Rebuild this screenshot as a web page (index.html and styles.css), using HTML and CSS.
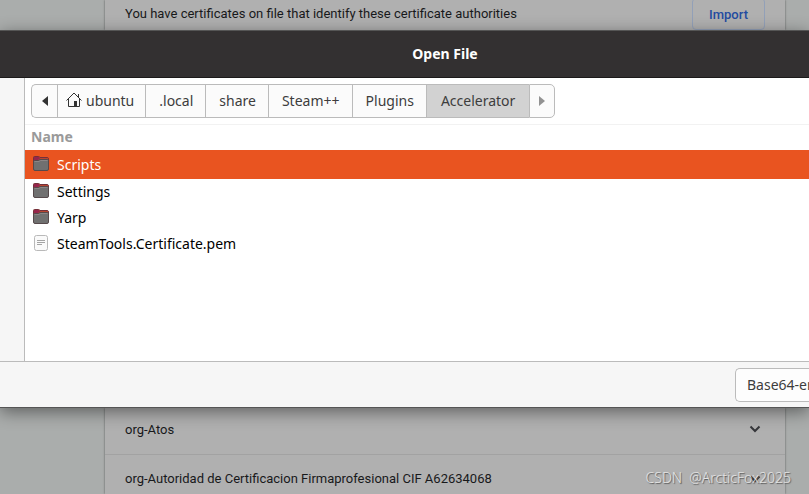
FILE: index.html
```
<!DOCTYPE html>
<html lang="en">
<head>
    <meta charset="UTF-8">
    <meta name="viewport" content="width=device-width, initial-scale=1.0">
    <title>Open File</title>
    <link rel="stylesheet" href="styles.css">
</head>
<body>
    <svg class="defs" aria-hidden="true">
        <symbol id="folder" viewBox="0 0 16 16">
            <path d="M0.500 3V1.500Q0.500 0.500 1.500 0.500H5.500Q6.500 0.500 7 1.500H14Q15.500 1.500 15.500 3V8H0.500Z" fill="#b8452f" stroke="#74303a"/>
            <path d="M1 1H6L7 2.500L5 4H1Z" fill="#96264c"/>
            <path d="M7 2.500H15" stroke="#b8452f"/>
            <path d="M0.500 5.500Q0.500 4.500 1.500 4.500H5.500L7 3.500H14.500Q15.500 3.500 15.500 4.500V13Q15.500 14.500 14 14.500H2Q0.500 14.500 0.500 13Z" fill="#707070" stroke="#56494b"/>
            <path d="M1.500 5.500H6L7.500 4.500H14.500" fill="none" stroke="#8c8686"/>
        </symbol>
        <symbol id="file" viewBox="0 0 16 16">
            <rect x="1.500" y="0.500" width="13" height="15" rx="2" fill="#fafafa" stroke="#b9b9b9"/>
            <path d="M4 5.500H12M4 7.500H12M4 9.500H9" stroke="#a4a4a4"/>
        </symbol>
        <symbol id="chevron" viewBox="0 0 12 8">
            <path d="M1.500 1.500L6 6L10.500 1.500" fill="none" stroke="#36373b" stroke-width="2"/>
        </symbol>
    </svg>

    <section class="card intro">
        <p>You have certificates on file that identify these certificate authorities</p>
        <button class="import">Import</button>
    </section>

    <section class="dialog" role="dialog" aria-labelledby="dialogTitle">
        <header class="titlebar">
            <h1 id="dialogTitle">Open File</h1>
        </header>
        <div class="content">
            <aside class="places"></aside>
            <div class="browser">
                <nav class="pathbar">
                    <button class="arrow" aria-label="Back">
                        <svg width="6" height="10" viewBox="0 0 6 10"><path d="M6 0V10L0 5Z" fill="#333"/></svg>
                    </button>
                    <button class="home">
                        <svg width="16" height="16" viewBox="0 0 16 16">
                            <path d="M0.500 8.500L8 1L15.500 8.500M2.500 7V14.500H13.500V7M12.500 5V2" fill="none" stroke="#333"/>
                            <path d="M8 9H11V14H8Z" fill="#333"/>
                        </svg>
                        ubuntu
                    </button>
                    <button>.local</button>
                    <button>share</button>
                    <button>Steam++</button>
                    <button>Plugins</button>
                    <button class="current">Accelerator</button>
                    <button class="arrow" aria-label="Forward">
                        <svg width="6" height="10" viewBox="0 0 6 10"><path d="M0 0V10L6 5Z" fill="#929292"/></svg>
                    </button>
                </nav>
                <table class="files">
                    <thead>
                        <tr><th>Name</th></tr>
                    </thead>
                    <tbody>
                        <tr class="selected"><td><svg><use href="#folder"/></svg>Scripts</td></tr>
                        <tr><td><svg><use href="#folder"/></svg>Settings</td></tr>
                        <tr><td><svg><use href="#folder"/></svg>Yarp</td></tr>
                        <tr><td><svg><use href="#file"/></svg>SteamTools.Certificate.pem</td></tr>
                    </tbody>
                </table>
            </div>
        </div>
        <footer class="filter">
            <select aria-label="File type">
                <option>Base64-encoded</option>
            </select>
        </footer>
    </section>

    <section class="card authorities">
        <div class="authority">
            <span>org-Atos</span>
            <svg><use href="#chevron"/></svg>
        </div>
        <div class="authority">
            <span>org-Autoridad de Certificacion Firmaprofesional CIF A62634068</span>
            <svg><use href="#chevron"/></svg>
        </div>
    </section>

    <svg class="marks" aria-hidden="true">
        <defs>
            <text id="mark"><tspan class="cjk">唐俊喜</tspan><tspan>-nullmax</tspan></text>
        </defs>
        <use href="#mark" transform="translate(-152 238) rotate(-30)"/>
        <use href="#mark" transform="translate(-100 328) rotate(-30)"/>
        <use href="#mark" transform="translate(-48 418) rotate(-30)"/>
        <use href="#mark" transform="translate(48 120) rotate(-30)"/>
        <use href="#mark" transform="translate(102 212) rotate(-30)"/>
        <use href="#mark" transform="translate(154 302) rotate(-30)"/>
        <use href="#mark" transform="translate(206 393) rotate(-30)"/>
        <use href="#mark" transform="translate(366 180) rotate(-30)"/>
        <use href="#mark" transform="translate(418 270) rotate(-30)"/>
        <use href="#mark" transform="translate(470 360) rotate(-30)"/>
        <use href="#mark" transform="translate(632 146) rotate(-30)"/>
        <use href="#mark" transform="translate(684 237) rotate(-30)"/>
        <use href="#mark" transform="translate(736 327) rotate(-30)"/>
    </svg>
    <div class="credit">CSDN &nbsp;@ArcticFox2025</div>
</body>
</html>
```
FILE: styles.css
```
*{
    box-sizing: border-box;
}

body{
    position: relative;
    margin: 0;
    height: 100vh;
    display: flex;
    flex-direction: column;
    overflow: hidden;
    background-color: #aaadac;
    font-family: "Noto Sans", "Open Sans", sans-serif;
    font-size: 14px;
}

button,
select{
    font: inherit;
    color: #3d3d3d;
}

.defs{
    position: absolute;
    width: 0;
    height: 0;
}

/* Settings page behind the dialog */
.card{
    margin: 0 24px 0 105px;
    background-color: #b0b0b0;
    box-shadow: 0 0 2px rgba(0,0,0,0.5);
    color: #18191b;
    font-family: Roboto, sans-serif;
    font-size: 13px;
}

.intro{
    flex: none;
    display: flex;
    justify-content: space-between;
    align-items: flex-end;
    height: 30px;
    padding: 0 20px;
}

.intro p{
    margin: 0;
    line-height: 32px;
}

.import{
    height: 32px;
    width: 73px;
    border: 1px solid #92a0b8;
    border-radius: 4px;
    background: none;
    color: #234ba0;
    font-weight: 500;
    line-height: 30px;
}

.authorities{
    flex: 1;
    min-height: 0;
}

.authority{
    display: flex;
    justify-content: space-between;
    align-items: center;
    height: 47px;
    padding: 0 24px 0 20px;
}

.authority:first-child{
    padding-bottom: 4px;
    border-bottom: 1px solid #a2a2a2;
}

.authority svg{
    width: 12px;
    height: 8px;
}

/* File chooser */
.dialog{
    position: relative;
    flex: none;
    border-top: 1px solid #555;
    border-bottom: 1px solid #555;
    background-color: #f6f6f6;
    box-shadow: 0 4px 16px rgba(0,0,0,0.45);
}

.titlebar{
    height: 47px;
    padding-left: 81px;
    border-bottom: 1px solid #1c1a1a;
    background-color: #333031;
}

h1{
    margin: 0;
    color: white;
    font-size: 14px;
    line-height: 46px;
    text-align: center;
}

.content{
    display: flex;
    min-height: 283px;
}

.places{
    width: 25px;
    border-right: 1px solid #bbb;
}

.browser{
    flex: 1;
    background-color: white;
}

.pathbar{
    display: flex;
    padding: 6px;
    border-bottom: 1px solid #f2f2f2;
}

.pathbar button{
    display: flex;
    align-items: center;
    justify-content: center;
    height: 34px;
    padding: 0 12px 2px 13px;
    border: 1px solid #bbb;
    border-right: none;
    background-color: #fbfbfb;
}

.pathbar .home{
    gap: 4px;
    padding: 0 11px 2px 8px;
}

.pathbar .arrow{
    width: 26px;
    padding: 0;
}

.pathbar button:first-child{
    border-radius: 5px 0 0 5px;
}

.pathbar button:last-child{
    border-right: 1px solid #bbb;
    border-radius: 0 5px 5px 0;
}

.pathbar .current{
    padding: 0 14px 2px;
    background-color: #d2d2d2;
}

.files{
    width: 100%;
    border-collapse: collapse;
}

.files th{
    height: 25px;
    padding: 0 6px 2px;
    color: #9a9a9a;
    text-align: left;
    line-height: 20px;
}

.files td{
    height: 26px;
    padding: 0 8px;
    color: black;
    line-height: 20px;
}

.files .selected td{
    height: 29px;
    background-color: #e95420;
    color: white;
}

.files svg{
    width: 16px;
    height: 16px;
    margin-right: 8px;
    vertical-align: -2px;
}

.filter{
    display: flex;
    justify-content: flex-end;
    padding: 6px 0 5px;
    border-top: 1px solid #bbb;
}

.filter select{
    appearance: none;
    width: 74px;
    height: 34px;
    padding: 0 0 2px 11px;
    border: 1px solid #bbb;
    border-right: none;
    border-radius: 5px 0 0 5px;
    background-color: #fdfdfd;
}

/* Watermarks */
.marks{
    position: absolute;
    top: 0;
    left: 0;
    width: 100%;
    height: 100%;
    fill: rgba(0,0,0,0.02);
    font-family: "Liberation Mono", monospace;
    font-size: 20px;
    pointer-events: none;
}

.cjk{
    font-family: "Noto Sans CJK SC", sans-serif;
    font-size: 24px;
}

.credit{
    position: absolute;
    right: 18px;
    bottom: 6px;
    color: #e4e4e4;
    font-family: "Noto Sans", sans-serif;
    font-size: 14px;
    font-weight: 300;
    line-height: 20px;
    text-shadow: 1px 1px 1px #555;
}
```
